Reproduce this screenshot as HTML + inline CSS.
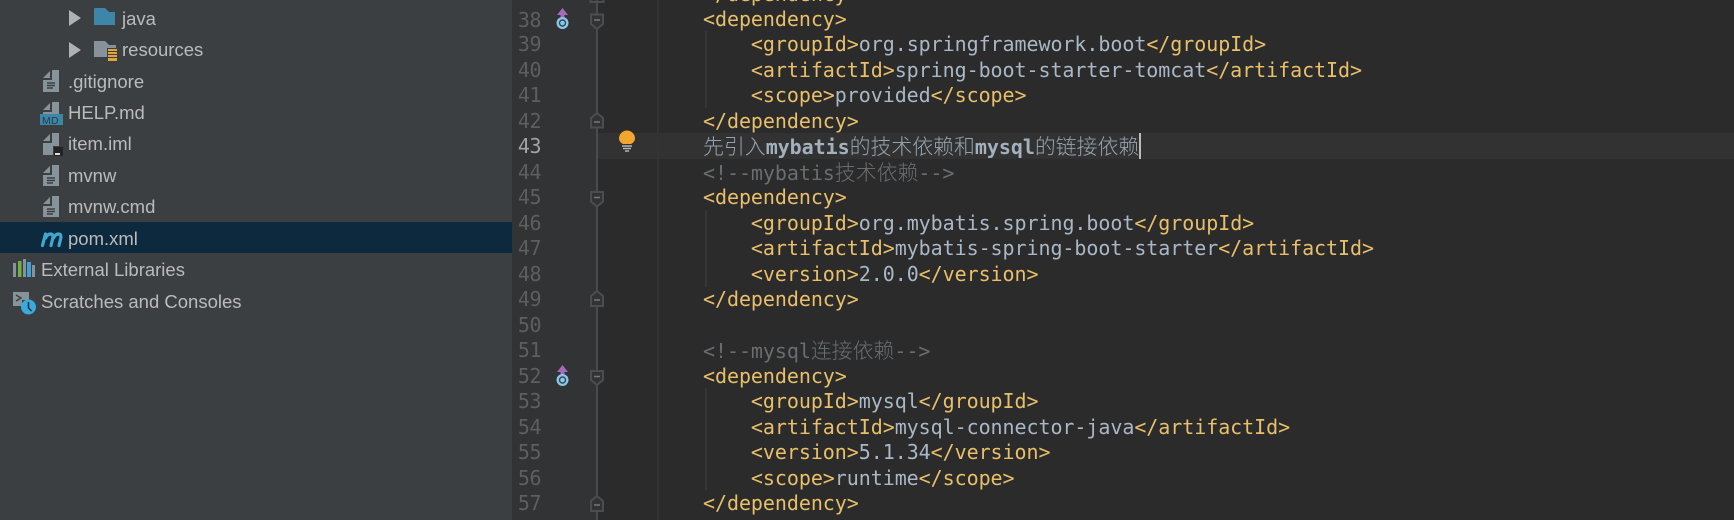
<!DOCTYPE html>
<html><head><meta charset="utf-8"><style>
html,body{margin:0;padding:0;background:#2b2b2b}
#r{position:relative;width:1734px;height:520px;overflow:hidden;background:#2b2b2b}
.a{position:absolute}
.t{position:absolute;color:#bbb;font:18.5px/31px "Liberation Sans",sans-serif;white-space:nowrap}
.n{position:absolute;left:512px;width:29px;text-align:right;color:#5c5f62;font:20px/25px "DejaVu Sans Mono",monospace;letter-spacing:-.5px;white-space:nowrap}
.l{position:absolute;left:703px;color:#e8bf6a;font:20px/25px "DejaVu Sans Mono","Noto Sans CJK SC",monospace;white-space:pre;letter-spacing:-.06px}
.l b{font-weight:400;color:#a9b7c6}
.c,.c b{color:#6a6d70;font-weight:400}
.z{font-family:"Noto Sans CJK SC",sans-serif;font-size:20.9px;font-weight:300;letter-spacing:0}
.hl .z{color:#95a3b0}
.hl i{font-style:normal;font-weight:700;color:#a3b1bf}
svg{position:absolute;overflow:visible}
</style></head><body><div id="r">
<div class="a" style="left:0;top:0;width:512px;height:520px;background:#3c3f41"></div>
<div class="a" style="left:512px;top:0;width:86px;height:520px;background:#313335"></div>
<div class="a" style="left:0;top:222px;width:512px;height:31px;background:#0d293e"></div>
<div class="a" style="left:598px;top:133px;width:1136px;height:26px;background:#323232"></div>
<div class="a" style="left:657px;top:0;width:2px;height:520px;background:#333"></div>
<div class="a" style="left:596px;top:0;width:2px;height:520px;background:#4a4b4c"></div>
<div class="a" style="left:705px;top:31px;width:2px;height:77px;background:#363636"></div>
<div class="a" style="left:705px;top:210px;width:2px;height:77px;background:#363636"></div>
<div class="a" style="left:705px;top:388px;width:2px;height:102px;background:#363636"></div>
<div class="a" style="left:1139px;top:133px;width:2px;height:26px;background:#bbb"></div>

<svg width="1734" height="520" style="left:0;top:0">
<path d="M69 10L81 18L69 26ZM69 42L81 50L69 58Z" fill="#afb1b3"/>
<path d="M94 25V9Q94 8 95 8H105L109 12H115V25Z" fill="#3d86a8"/>
<path d="M94 57V41H105L109 45H116V57Z" fill="#87939a"/>
<path d="M107 48h11v13h-11z" fill="#3c3f41"/>
<path d="M108 49h9v2h-9zM108 52h9v2h-9zM108 55h9v2h-9zM108 58h9v3h-9z" fill="#e0a43a"/>

<g fill="#87939a">
<path d="M43 78L50 71V78Z"/><path d="M52 70H59V92H43V80H52Z"/>
<path d="M43 110L50 103V110Z"/><path d="M52 102H59V114H43V112H52Z"/>
<path d="M43 141L50 134V141Z"/><path d="M52 133H59V155H43V143H52Z"/>
<path d="M43 173L50 166V173Z"/><path d="M52 165H59V186H43V175H52Z"/>
<path d="M43 204L50 197V204Z"/><path d="M52 196H59V217H43V206H52Z"/>
</g>
<path d="M47 83h8M47 85.500h8M47 88h6M47 178h8M47 180.500h8M47 183h6M47 209h8M47 211.500h8M47 214h6" stroke="#3c3f41" stroke-width="1.400"/>
<rect x="40" y="114" width="23" height="11" fill="#3d86a8"/>
<text x="42" y="124" font-family="Liberation Sans,sans-serif" font-size="10.500" fill="#2b3a44" letter-spacing=".3">MD</text>
<rect x="53" y="146" width="11" height="11" fill="#3c3f41"/>
<rect x="54" y="147" width="9" height="9" fill="#232323"/><rect x="55" y="153" width="5" height="2" fill="#ddd"/>
<path d="M42.500 245.500L45.500 234M45.500 238Q47.500 234 50.500 234Q53.500 234 52.800 238L51 245.500M53.500 238Q55.500 234 58.500 234Q61.500 234 60.800 238L59 245.500" stroke="#3fa8d0" stroke-width="3.200" fill="none" stroke-linecap="round"/>
<rect x="13" y="263" width="3" height="14" fill="#87939a"/><rect x="18" y="261" width="3.500" height="16" fill="#6cb33f"/><rect x="23" y="259" width="3" height="18" fill="#87939a"/><rect x="27" y="262" width="4" height="15" fill="#40a0d8"/><rect x="32" y="265" width="3" height="12" fill="#87939a"/>
<path d="M13 292H29V300H22V306H13Z" fill="#87939a"/><path d="M16 295L21 298L16 301" stroke="#3c3f41" fill="none" stroke-width="1.400"/>
<circle cx="28.500" cy="307" r="7.500" fill="#3aa9dc"/><path d="M28.500 302V308L31.500 311" stroke="#20303a" stroke-width="1.500" fill="none"/>

<path d="M590.500 -5V2H603.500V-5" stroke="#4c4d4e" stroke-width="2" fill="none"/>
<g fill="#313335" stroke="#4c4d4e" stroke-width="2">
<path d="M591 14.500H603V24L597 29L591 24Z"/>
<path d="M591 127.500H603V118L597 113L591 118Z"/>
<path d="M591 192H603V201.500L597 206.500L591 201.500Z"/>
<path d="M591 306H603V296L597 291L591 296Z"/>
<path d="M591 371H603V380L597 385L591 380Z"/>
<path d="M591 511H603V501L597 496L591 501Z"/>
</g>
<path d="M594 20H600M594 122H600M594 197.500H600M594 300H600M594 376.500H600M594 505H600" stroke="#777" stroke-width="1.500"/>

<path d="M557 15L562.500 8L568 15H564.500V19H560.500V15Z" fill="#a36cb8"/>
<circle cx="562.500" cy="23" r="6" fill="#8fc6e8"/><circle cx="562.500" cy="23" r="3" fill="none" stroke="#2b4a5e" stroke-width="1.400"/>
<path d="M557 372L562.500 365L568 372H564.500V376H560.500V372Z" fill="#a36cb8"/>
<circle cx="562.500" cy="380" r="6" fill="#8fc6e8"/><circle cx="562.500" cy="380" r="3" fill="none" stroke="#2b4a5e" stroke-width="1.400"/>

<path d="M623 144Q619 142 619 138.500A8 8 0 0 1 635 138.500Q635 142 631 144Z" fill="#f2a62d"/>
<path d="M622 146H632M623 148.500H631M625 151H629" stroke="#b5b5b5" stroke-width="1.400"/>
</svg>

<div class="t" style="left:122px;top:3px">java</div>
<div class="t" style="left:122px;top:34px">resources</div>
<div class="t" style="left:68px;top:66px">.gitignore</div>
<div class="t" style="left:68px;top:97px">HELP.md</div>
<div class="t" style="left:68px;top:128px">item.iml</div>
<div class="t" style="left:68px;top:160px">mvnw</div>
<div class="t" style="left:68px;top:191px">mvnw.cmd</div>
<div class="t" style="left:68px;top:223px">pom.xml</div>
<div class="t" style="left:41px;top:254px">External Libraries</div>
<div class="t" style="left:41px;top:286px">Scratches and Consoles</div>

<div class="n" style="top:8px">38</div>
<div class="n" style="top:32px">39</div>
<div class="n" style="top:58px">40</div>
<div class="n" style="top:83px">41</div>
<div class="n" style="top:109px">42</div>
<div class="n" style="top:134px;color:#a4a3a3">43</div>
<div class="n" style="top:160px">44</div>
<div class="n" style="top:185px">45</div>
<div class="n" style="top:211px">46</div>
<div class="n" style="top:236px">47</div>
<div class="n" style="top:262px">48</div>
<div class="n" style="top:287px">49</div>
<div class="n" style="top:313px">50</div>
<div class="n" style="top:338px">51</div>
<div class="n" style="top:364px">52</div>
<div class="n" style="top:389px">53</div>
<div class="n" style="top:415px">54</div>
<div class="n" style="top:440px">55</div>
<div class="n" style="top:466px">56</div>
<div class="n" style="top:491px">57</div>

<div class="l" style="top:-18px">&lt;/dependency&gt;</div>
<div class="l" style="top:7px">&lt;dependency&gt;</div>
<div class="l" style="top:32px">    &lt;groupId&gt;<b>org.springframework.boot</b>&lt;/groupId&gt;</div>
<div class="l" style="top:58px">    &lt;artifactId&gt;<b>spring-boot-starter-tomcat</b>&lt;/artifactId&gt;</div>
<div class="l" style="top:83px">    &lt;scope&gt;<b>provided</b>&lt;/scope&gt;</div>
<div class="l" style="top:109px">&lt;/dependency&gt;</div>
<div class="l hl" style="top:134px"><b><span class="z">先引入</span><i>mybatis</i><span class="z">的技术依赖和</span><i>mysql</i><span class="z">的链接依赖</span></b></div>
<div class="l c" style="top:160px">&lt;!--mybatis<span class="z">技术依赖</span>--&gt;</div>
<div class="l" style="top:185px">&lt;dependency&gt;</div>
<div class="l" style="top:211px">    &lt;groupId&gt;<b>org.mybatis.spring.boot</b>&lt;/groupId&gt;</div>
<div class="l" style="top:236px">    &lt;artifactId&gt;<b>mybatis-spring-boot-starter</b>&lt;/artifactId&gt;</div>
<div class="l" style="top:262px">    &lt;version&gt;<b>2.0.0</b>&lt;/version&gt;</div>
<div class="l" style="top:287px">&lt;/dependency&gt;</div>
<div class="l c" style="top:338px">&lt;!--mysql<span class="z">连接依赖</span>--&gt;</div>
<div class="l" style="top:364px">&lt;dependency&gt;</div>
<div class="l" style="top:389px">    &lt;groupId&gt;<b>mysql</b>&lt;/groupId&gt;</div>
<div class="l" style="top:415px">    &lt;artifactId&gt;<b>mysql-connector-java</b>&lt;/artifactId&gt;</div>
<div class="l" style="top:440px">    &lt;version&gt;<b>5.1.34</b>&lt;/version&gt;</div>
<div class="l" style="top:466px">    &lt;scope&gt;<b>runtime</b>&lt;/scope&gt;</div>
<div class="l" style="top:491px">&lt;/dependency&gt;</div>
</div></body></html>
